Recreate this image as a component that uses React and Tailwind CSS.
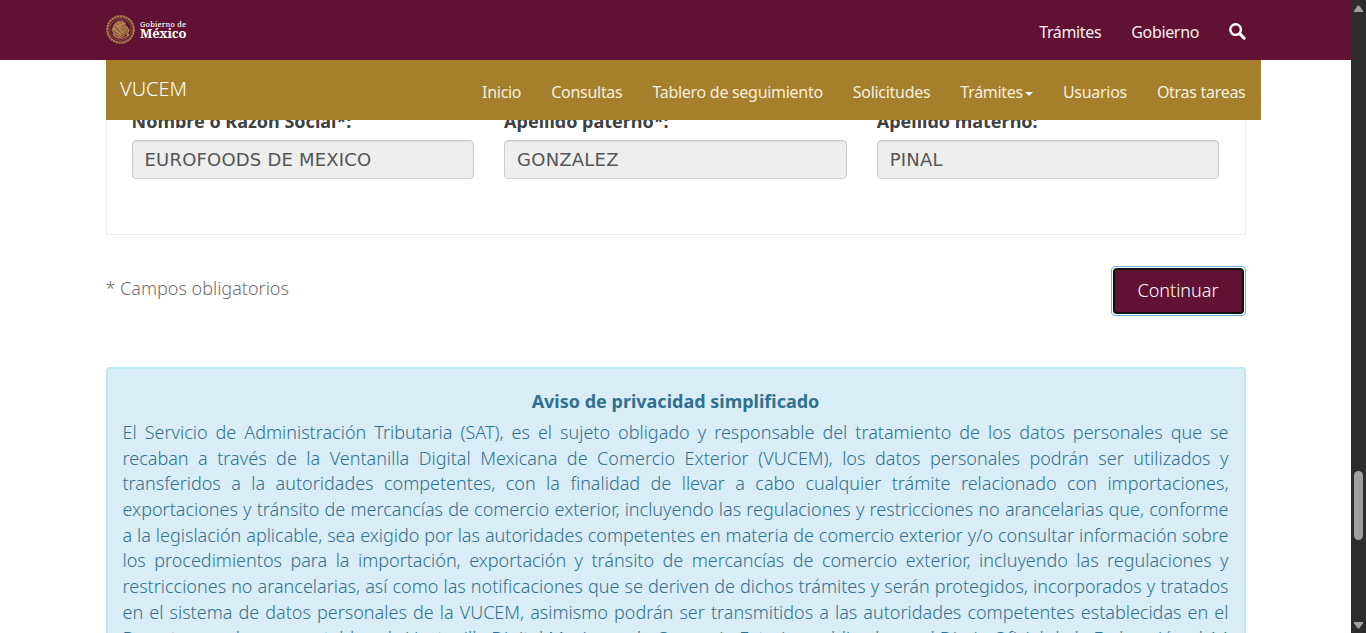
const NAV = ["Inicio", "Consultas", "Tablero de seguimiento", "Solicitudes", "Trámites", "Usuarios", "Otras tareas"];

const FIELDS = [
  { label: "Nombre o Razón Social*:", value: "EUROFOODS DE MEXICO" },
  { label: "Apellido paterno*:", value: "GONZALEZ" },
  { label: "Apellido materno:", value: "PINAL" },
];

const NOTICE = [
  "El Servicio de Administración Tributaria (SAT), es el sujeto obligado y responsable del tratamiento de los datos personales que se",
  "recaban a través de la Ventanilla Digital Mexicana de Comercio Exterior (VUCEM), los datos personales podrán ser utilizados y",
  "transferidos a la autoridades competentes, con la finalidad de llevar a cabo cualquier trámite relacionado con importaciones,",
  "exportaciones y tránsito de mercancías de comercio exterior, incluyendo las regulaciones y restricciones no arancelarias que, conforme",
  "a la legislación aplicable, sea exigido por las autoridades competentes en materia de comercio exterior y/o consultar información sobre",
  "los procedimientos para la importación, exportación y tránsito de mercancías de comercio exterior, incluyendo las regulaciones y",
  "restricciones no arancelarias, así como las notificaciones que se deriven de dichos trámites y serán protegidos, incorporados y tratados",
  "en el sistema de datos personales de la VUCEM, asimismo podrán ser transmitidos a las autoridades competentes establecidas en el",
  "Decreto por el que se establece la Ventanilla Digital Mexicana de Comercio Exterior, publicado en el Diario Oficial de la Federación el 14",
];

function Seal() {
  return (
    <svg width="30" height="30" viewBox="0 0 30 30" fill="none" stroke="#a9804a">
      <circle cx="14.5" cy="14.5" r="13.2" strokeWidth="2.2" strokeDasharray="2.4 0.5" />
      <circle cx="14.5" cy="14.5" r="10.8" strokeWidth="0.8" stroke="#8c6340" />
      <path d="M8 10c2-4 7-5 10-3l2 2-2 1c3 1 4 4 3 7l-3 4-5 1-5-3-2-4z" fill="#9a6f43" strokeWidth="0.8" />
      <path d="M9 9l8 9M7 13l8 7M12 7l7 8M18 8l-5 3 4 2M7 19c3 5 12 6 16 0M20 11l3 4-2 5" strokeWidth="1.1" stroke="#bd9358" />
      <path d="M10 12l3 5M15 10l3 5M9 17l4 2M19 18l-4 3" strokeWidth="0.7" stroke="#7a3a35" />
    </svg>
  );
}

function Logo() {
  return (
    <div className="flex items-center gap-[4px]">
      <Seal />
      <div className="flex flex-col font-['Noto_Serif','Liberation_Serif',serif] text-white">
        <span className="h-[7px] text-[7.4px] leading-[8px] font-medium tracking-[0.2px]">Gobierno de</span>
        <span className="text-[13px] leading-[13px] font-bold tracking-[-0.25px]">México</span>
      </div>
    </div>
  );
}

function SearchIcon() {
  return (
    <svg width="17" height="17" viewBox="0 0 17 17" fill="none" stroke="#fff">
      <circle cx="6.6" cy="6.6" r="5.3" strokeWidth="2.4" />
      <path d="M10.6 10.6l4.6 4.6" strokeWidth="3" strokeLinecap="round" />
    </svg>
  );
}

export default function App() {
  return (
    <div className="flex h-[633px] w-[1366px] overflow-hidden bg-white font-['Noto_Sans',sans-serif]">
      <div className="flex h-full w-[1351px] flex-col overflow-hidden">
        <header className="relative z-10 flex h-[60px] shrink-0 items-center justify-between bg-[#611232] pl-[106px] pr-[105px]">
          <Logo />
          <nav className="flex items-center gap-[30px] pt-[4px] text-[16px] tracking-[-0.35px] text-[#f5edf0]">
            <a>Trámites</a>
            <a>Gobierno</a>
            <span className="-mt-[2px]"><SearchIcon /></span>
          </nav>
        </header>
        <div className="relative z-10 ml-[106px] flex h-[60px] w-[1155px] shrink-0 items-center justify-between bg-[#a57f2c] pl-[14px] pr-[15.5px]">
          <span className="pb-[2px] text-[20px] font-light text-white">VUCEM</span>
          <nav className="flex gap-[30px] pt-[4px] text-[16px] tracking-[-0.29px] text-[#f6efdf]">
            {NAV.map((n, i) => (
              <a key={n} className="flex items-center gap-[2px]">
                {n}
                {i === 4 && <span className="mt-[3px] border-x-4 border-t-4 border-x-transparent border-t-white" />}
              </a>
            ))}
          </nav>
        </div>
        <main className="ml-[105.5px] flex w-[1140px] flex-col">
          <section className="-mt-[11.5px] flex h-[126.5px] shrink-0 gap-[30px] border border-t-0 border-[#eee] pr-[25.2px] pl-[25px]">
            {FIELDS.map((f) => (
              <div key={f.label} className="flex flex-1 flex-col">
                <label className="h-[31.5px] text-[18px] leading-[25px] font-bold text-[#404041]">{f.label}</label>
                <div className="flex h-[39px] items-center rounded-[4px] border border-[#ccc] bg-[#eee] px-[12px] font-['DejaVu_Sans',sans-serif] text-[18px] tracking-[0.2px] text-[#555] shadow-[inset_0_1px_1px_rgba(0,0,0,0.075)]">
                  {f.value}
                </div>
              </div>
            ))}
          </section>
          <div className="mt-[31px] flex h-[50px] shrink-0 items-start justify-between">
            <p className="mt-[9px] text-[18px] leading-[26px] font-light text-[#6f6f6f]">* Campos obligatorios</p>
            <div className="h-[50px] w-[135px] rounded-[4px] border border-[#66afe9] p-px">
              <button className="h-[46px] w-full rounded-[4px] border-2 border-[#101010] bg-[#611232] pb-[2px] text-[18px] font-light text-white">Continuar</button>
            </div>
          </div>
          <section className="mt-[51px] h-[400px] shrink-0 rounded-[4px] border-2 border-[#bce8f1] bg-[#d9edf7] px-[15px] pt-[20px] text-[18px] leading-[25.714px] text-[#31708f]">
            <h2 className="mb-[5.07px] text-center font-bold">Aviso de privacidad simplificado</h2>
            <div className="font-light">
              {NOTICE.map((l) => (
                <p key={l} className="text-justify whitespace-nowrap [text-align-last:justify]">{l}</p>
              ))}
            </div>
          </section>
        </main>
      </div>
      <aside className="flex h-full w-[15px] flex-col items-center bg-[#2c2c2c] pt-[5px] pb-[4px]">
        <svg width="9" height="7" viewBox="0 0 9 7" fill="#9f9f9f"><path d="M3.8.4h1.4L9 5.7V7H0V5.7z" /></svg>
        <div className="mt-[459px] h-[69px] w-[9px] rounded-full bg-[#9f9f9f]" />
        <svg className="mt-auto" width="9" height="7" viewBox="0 0 9 7" fill="#9f9f9f"><path d="M0 0h9v1.3L5.2 6.6H3.8L0 1.3z" /></svg>
      </aside>
    </div>
  );
}
